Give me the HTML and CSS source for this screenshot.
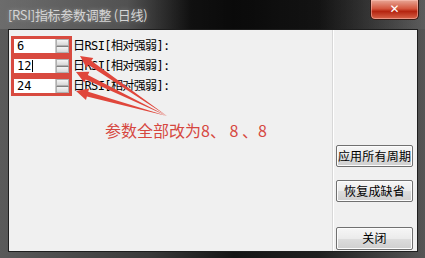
FILE: index.html
```html
<!DOCTYPE html>
<html>
<head>
<meta charset="utf-8">
<link rel="stylesheet" href="styles.css">
</head>
<body>
<div class="win">
  <div class="titlebar">
    <span class="title">[RSI]指标参数调整 (日线)</span>
    <div class="close">✕</div>
  </div>
  <div class="client">
    <div class="left">
      <div class="row">
        <div class="box"><div class="inp">6</div><div class="spin"><i></i><i></i></div></div>
        <span class="lbl">日RSI[相对强弱]:</span>
      </div>
      <div class="row">
        <div class="box"><div class="inp">12<b class="caret"></b></div><div class="spin"><i></i><i></i></div></div>
        <span class="lbl">日RSI[相对强弱]:</span>
      </div>
      <div class="row">
        <div class="box"><div class="inp">24</div><div class="spin"><i></i><i></i></div></div>
        <span class="lbl">日RSI[相对强弱]:</span>
      </div>
    </div>
    <div class="sep"></div>
    <div class="right">
      <div class="btn b1">应用所有周期</div>
      <div class="btn b2">恢复成缺省</div>
      <div class="btn b3">关闭</div>
    </div>
  </div>
  <svg class="arrows" width="425" height="258" viewBox="0 0 425 258">
    <polygon points="167,116 91.3,60.8 93.3,57.9 80,56 86.5,67.7 88.5,64.9" />
    <polygon points="167,116 87.9,74.95 89.4,71.8 76,72 84.2,82.6 85.7,79.45" />
    <polygon points="167,116 88.2,91.8 89.2,88.4 76,91 86.0,100.0 86.9,96.6" />
  </svg>
  <div class="note">参数全部改为8、 8 、8</div>
</div>
</body>
</html>
```
FILE: styles.css
```css
* { box-sizing: border-box; }
body { margin: 0; background: #000; }
.win {
  position: relative;
  width: 425px;
  height: 258px;
  display: flex;
  flex-direction: column;
  background: linear-gradient(to right, #5a5a5a 0%, #3a3a3a 35%, #151515 55%, #202020 75%, #555 100%);
  font-family: "Noto Sans CJK SC", sans-serif;
  overflow: hidden;
}
.titlebar {
  height: 29px;
  flex: none;
  display: flex;
  align-items: flex-start;
  padding-left: 8px;
  background: linear-gradient(to right, rgba(120,120,120,0.6) 0%, rgba(100,100,100,0.5) 30%, rgba(0,0,0,0.6) 45%, rgba(0,0,0,0.4) 75%, rgba(110,110,110,0.3) 100%);
}
.title {
  margin-top: 6px;
  font-size: 13px;
  line-height: 18px;
  color: #d4d4d4;
  text-shadow: 0 0 4px rgba(255,255,255,0.35);
  letter-spacing: -0.3px;
}
.close {
  margin-left: auto;
  margin-right: 6px;
  width: 49px;
  height: 20px;
  border: 1px solid #3a1a14;
  border-top: none;
  border-radius: 0 0 5px 5px;
  box-shadow: inset 0 0 0 1px rgba(255,200,190,0.5);
  background: linear-gradient(to bottom, #e8a796 0%, #d4573f 45%, #b52410 60%, #d8644a 100%);
  color: #fff;
  font-size: 12px;
  font-weight: bold;
  text-align: center;
  line-height: 19px;
  font-family: "DejaVu Sans", sans-serif;
}
.client {
  flex: 1;
  margin: 0 7px 6px 8px;
  background: #f0f0f0;
  border: 1px solid #1e1e1e;
  display: flex;
}
.left {
  width: 323px;
  padding: 6px 0 0 2px;
  display: flex;
  flex-direction: column;
}
.row {
  display: flex;
  align-items: center;
  height: 20px;
}
.box {
  width: 61px;
  height: 20px;
  border: 3px solid #d84a3f;
  display: flex;
  background: #fff;
}
.inp {
  width: 41px;
  height: 14px;
  background: #fff;
  font-size: 12px;
  line-height: 14px;
  padding-left: 3px;
  color: #000;
  font-family: "DejaVu Sans Mono", monospace;
  display: flex;
  align-items: center;
}
.caret {
  display: inline-block;
  width: 1px;
  height: 12px;
  background: #000;
  margin-left: 1px;
}
.spin {
  width: 14px;
  height: 14px;
  display: flex;
  flex-direction: column;
  border-left: 1px solid #c8c8c8;
}
.spin i {
  flex: 1;
  background: linear-gradient(#f4f4f4, #d8d8d8);
  border: 1px solid #b0b0b0;
}
.spin i + i { border-top: 1px solid #808080; }
.lbl {
  margin-left: 1px;
  font-size: 12px;
  line-height: 14px;
  color: #000;
  font-family: "DejaVu Sans Mono", "Noto Sans CJK SC", monospace;
  letter-spacing: -0.6px;
}
.sep {
  width: 2px;
  border-left: 1px solid #d8d8d8;
  background: #fff;
}
.right {
  flex: 1;
  display: flex;
  flex-direction: column;
  padding: 115px 0 0 2px;
}
.btn {
  width: 77px;
  height: 22px;
  border: 1px solid #707070;
  border-radius: 2px;
  background: linear-gradient(to bottom, #f6f6f6 0%, #ebebeb 50%, #dddddd 51%, #cfcfcf 100%);
  box-shadow: inset 0 0 0 1px #fcfcfc;
  font-size: 12px;
  line-height: 20px;
  text-align: center;
  color: #000;
  white-space: nowrap;
  letter-spacing: 0.2px;
}
.b2 { margin-top: 13px; }
.b3 { margin-top: 25px; height: 23px; }
.arrows {
  position: absolute;
  left: 0;
  top: 0;
}
.arrows polygon { fill: #e0463b; }
.note {
  position: absolute;
  left: 105px;
  top: 120px;
  font-size: 16px;
  line-height: 20px;
  color: #d6473f;
  white-space: pre;
}
```
